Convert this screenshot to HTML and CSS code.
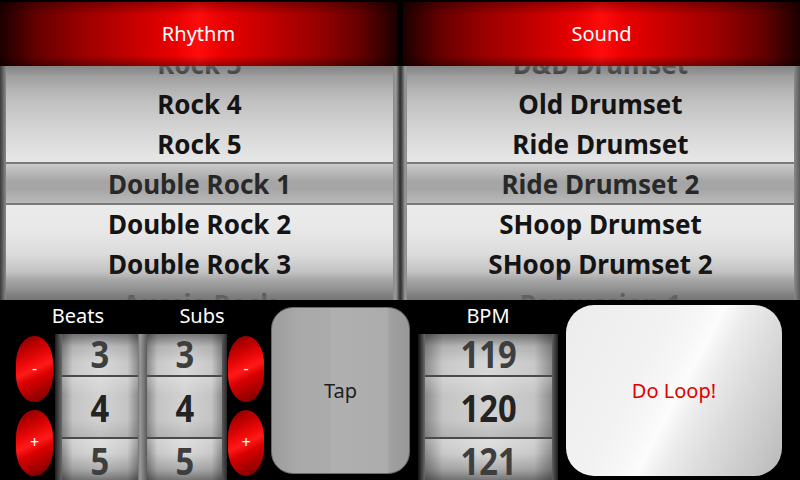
FILE: index.html
```html
<!DOCTYPE html>
<html>
<head>
<meta charset="utf-8">
<link rel="stylesheet" href="styles.css">
</head>
<body>
<div class="app">
  <div class="top">
    <div class="col col-l">
      <div class="head">Rhythm</div>
      <div class="frame">
        <div class="wheel">
          <ul class="items">
            <li>Rock 3</li>
            <li>Rock 4</li>
            <li>Rock 5</li>
            <li>Double Rock 1</li>
            <li>Double Rock 2</li>
            <li>Double Rock 3</li>
            <li>Aussie Rock</li>
          </ul>
          <div class="shade"></div>
          <div class="sel"></div>
        </div>
      </div>
    </div>
    <div class="col col-r">
      <div class="head">Sound</div>
      <div class="frame">
        <div class="wheel">
          <ul class="items">
            <li>D&amp;B Drumset</li>
            <li>Old Drumset</li>
            <li>Ride Drumset</li>
            <li>Ride Drumset 2</li>
            <li>SHoop Drumset</li>
            <li>SHoop Drumset 2</li>
            <li>Percussion 1</li>
          </ul>
          <div class="shade"></div>
          <div class="sel"></div>
        </div>
      </div>
    </div>
  </div>

  <div class="bottom">
    <div class="meter">
      <div class="labels">
        <div class="label">Beats</div>
        <div class="label">Subs</div>
      </div>
      <div class="controls">
        <div class="btncol">
          <div class="rbtn">-</div>
          <div class="rbtn">+</div>
        </div>
        <div class="duo">
          <div class="numcol">
            <div class="cell c-top"><span>3</span></div>
            <div class="cell c-mid"><span>4</span></div>
            <div class="cell c-bot"><span>5</span></div>
          </div>
          <div class="numcol">
            <div class="cell c-top"><span>3</span></div>
            <div class="cell c-mid"><span>4</span></div>
            <div class="cell c-bot"><span>5</span></div>
          </div>
        </div>
        <div class="btncol btncol-r">
          <div class="rbtn">-</div>
          <div class="rbtn">+</div>
        </div>
      </div>
    </div>

    <div class="tap">Tap</div>

    <div class="bpm">
      <div class="label">BPM</div>
      <div class="bpmwheel">
        <div class="numcol">
          <div class="cell c-top"><span>119</span></div>
          <div class="cell c-mid"><span>120</span></div>
          <div class="cell c-bot"><span>121</span></div>
        </div>
      </div>
    </div>

    <div class="loop">Do Loop!</div>
  </div>
</div>
</body>
</html>
```

FILE: styles.css
```css
* { box-sizing: border-box; }
html, body { margin: 0; padding: 0; }
body {
  width: 800px;
  height: 480px;
  overflow: hidden;
  background: #000;
  font-family: "Noto Sans", "Open Sans", "DejaVu Sans", sans-serif;
}
.app { width: 800px; height: 480px; display: flex; flex-direction: column; }

/* ---------- top pickers ---------- */
.top { display: flex; height: 300px; flex: none; overflow: hidden; }
.col { width: 400px; height: 300px; display: flex; flex-direction: column; }
.head {
  flex: none;
  height: 66px;
  border-top: 2px solid #000;
  color: #fff;
  font-size: 20px;
  line-height: 64px;
  text-align: center;
  background:
    linear-gradient(to bottom, rgba(0,0,0,0.3) 0%, rgba(0,0,0,0) 20%, rgba(0,0,0,0) 84%, rgba(0,0,0,0.35) 100%),
    linear-gradient(to right, #1c0000 0%, #640000 9%, #980000 20%, #c40000 33%, #ea0000 44%, #ff0c0c 50%, #ea0000 56%, #c40000 67%, #980000 80%, #640000 91%, #1c0000 100%);
}
.col-l .head { margin-right: 3px; }
.col-r .head { margin-left: 3px; }

.frame {
  flex: 1;
  min-height: 0;
  display: flex;
}
.col-l .frame { padding: 0 7px 0 6px; background: linear-gradient(to right, #3a3a3a 0, #8a8a8a 6px, #8a8a8a 393px, #9a9a9a 396px, #4a4a4a 399px, #2e2e2e 400px); }
.col-r .frame { padding: 0 6px 0 7px; background: linear-gradient(to right, #2e2e2e 0, #4a4a4a 2px, #9a9a9a 5px, #8a8a8a 7px, #8a8a8a 394px, #5a5a5a 400px); }

.wheel {
  position: relative;
  flex: 1;
  min-height: 0;
  overflow: hidden;
  background: linear-gradient(to bottom, #8e8e8e 0%, #a8a8a8 6%, #c0c0c0 15%, #d6d6d6 28%, #e6e6e6 40%, #ececec 55%, #e8e8e8 70%, #dcdcdc 80%, #c0c0c0 89%, #989898 96%, #707070 100%);
}
.items {
  list-style: none;
  margin: -22px 0 0 0;
  padding: 0;
}
.items li {
  height: 40px;
  line-height: 40px;
  text-align: center;
  font-size: 26px;
  font-weight: 700;
  color: #141414;
  white-space: nowrap;
}
.shade {
  position: absolute;
  left: 0; right: 0; top: 0; bottom: 0;
  background: linear-gradient(to bottom, rgba(130,130,130,0.7) 0px, rgba(150,150,150,0.3) 10px, rgba(160,160,160,0) 22px, rgba(160,160,160,0) 205px, rgba(140,140,140,0.55) 222px, rgba(120,120,120,0.8) 234px);
}
.sel {
  position: absolute;
  left: 0; right: 0;
  top: 96px;
  height: 43px;
  border-top: 2px solid #7a7a7a;
  border-bottom: 2px solid #7a7a7a;
  background: linear-gradient(to bottom, rgba(70,70,70,0.18) 0%, rgba(70,70,70,0.42) 45%, rgba(70,70,70,0.42) 65%, rgba(70,70,70,0.3) 100%);
}

/* ---------- bottom controls ---------- */
.bottom {
  flex: 1;
  display: flex;
  align-items: flex-start;
  padding-left: 16px;
}
.label {
  color: #fff;
  font-size: 20px;
  height: 34px;
  line-height: 32px;
  text-align: center;
}
.meter { width: 248px; display: flex; flex-direction: column; }
.labels { display: flex; }
.labels .label { flex: 1; }
.controls { display: flex; height: 146px; }

.btncol {
  width: 37px;
  display: flex;
  flex-direction: column;
  gap: 8px;
  padding-top: 2px;
  margin-right: 2px;
}
.btncol-r { width: 36px; margin-right: 0; margin-left: 1px; }
.rbtn {
  height: 66px;
  border-radius: 18px / 27px;
  background: linear-gradient(155deg, #7a0000 0%, #c00000 22%, #f00a0a 40%, #ff1a1a 50%, #d80000 62%, #a00000 82%, #6a0000 100%);
  color: #fff;
  font-size: 16px;
  text-align: center;
  line-height: 64px;
}

.duo {
  width: 172px;
  display: flex;
  gap: 9px;
  padding: 0 5px 0 7px;
  background: linear-gradient(to right, #1e1e1e 0, #6a6a6a 7px, #5a5a5a 76px, #3a3a3a 80px, #9a9a9a 85px, #5a5a5a 92px, #6a6a6a 165px, #2a2a2a 172px);
}
.numcol { flex: 1; display: flex; flex-direction: column; }
.duo .numcol:first-child { flex: 0 0 76px; }
.cell {
  text-align: center;
  font-size: 38px;
  font-weight: 700;
  overflow: hidden;
  white-space: nowrap;
}
.cell span { display: inline-block; transform: scaleX(0.86); }
.c-top {
  height: 41px;
  line-height: 39px;
  color: #3e3e3e;
  background:
    linear-gradient(to bottom, rgba(0,0,0,0.45) 0%, rgba(0,0,0,0.12) 30%, rgba(255,255,255,0) 70%),
    linear-gradient(to right, #8a8a8a 0%, #c8c8c8 14%, #d8d8d8 50%, #c8c8c8 86%, #8a8a8a 100%);
}
.c-mid {
  height: 62px;
  line-height: 60px;
  color: #232323;
  border-top: 2px solid #4a4a4a;
  background:
    linear-gradient(to bottom, rgba(255,255,255,0.25) 0%, rgba(255,255,255,0) 30%, rgba(0,0,0,0) 70%, rgba(0,0,0,0.1) 100%),
    linear-gradient(to right, #8a8a8a 0%, #c4c4c4 14%, #d2d2d2 50%, #c4c4c4 86%, #8a8a8a 100%);
}
.c-bot {
  height: 43px;
  line-height: 42px;
  color: #3e3e3e;
  border-top: 2px solid #4a4a4a;
  background:
    linear-gradient(to bottom, rgba(255,255,255,0.2) 0%, rgba(0,0,0,0) 35%, rgba(0,0,0,0.2) 75%, rgba(0,0,0,0.45) 100%),
    linear-gradient(to right, #8a8a8a 0%, #c8c8c8 14%, #d8d8d8 50%, #c8c8c8 86%, #8a8a8a 100%);
}

.tap {
  width: 139px;
  height: 167px;
  margin: 7px 0 0 7px;
  border-radius: 22px;
  border: 1px solid #6a6a6a;
  background: linear-gradient(to right, #9c9c9c 0%, #a9a9a9 20%, #ababab 42%, #b0b0b0 43%, #acacac 84%, #a0a0a0 86%, #989898 100%);
  color: #1e1e1e;
  font-size: 20px;
  line-height: 165px;
  text-align: center;
}

.bpm { width: 140px; margin-left: 8px; display: flex; flex-direction: column; }
.bpmwheel {
  height: 146px;
  display: flex;
  padding: 0 6px 0 7px;
  background: linear-gradient(to right, #0e0e0e 0, #6a6a6a 7px, #6a6a6a 133px, #1e1e1e 140px);
}

.loop {
  width: 216px;
  height: 171px;
  margin: 5px 0 0 8px;
  border-radius: 28px;
  background: linear-gradient(118deg, #ececec 0%, #f2f2f2 35%, #f7f7f7 46%, #fcfcfc 52%, #ececec 60%, #dcdcdc 72%, #c8c8c8 88%, #b8b8b8 100%);
  color: #e00000;
  font-size: 20px;
  line-height: 171px;
  text-align: center;
}
```
